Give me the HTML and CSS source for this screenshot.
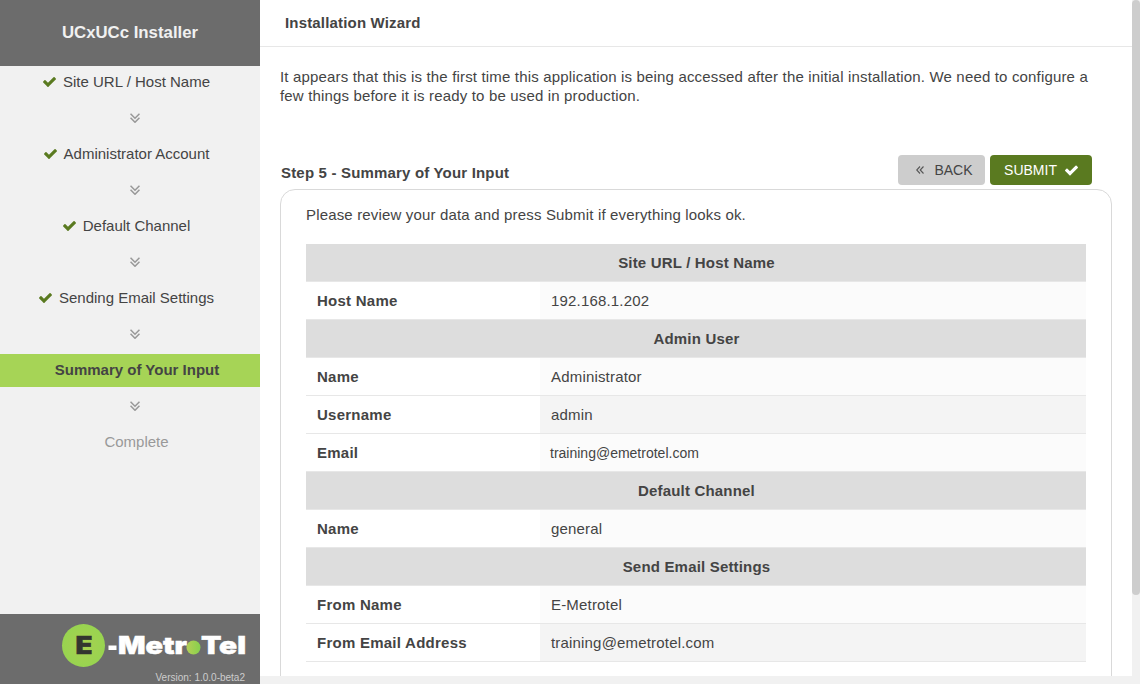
FILE: index.html
```html
<!DOCTYPE html>
<html lang="en">
<head>
<meta charset="utf-8">
<title>Installation Wizard</title>
<link rel="stylesheet" href="styles.css">
</head>
<body>
<svg class="defs" width="0" height="0">
  <symbol id="check" viewBox="0 0 1550 1188"><path d="M1550 232q0 40-28 68l-724 724-136 136q-28 28-68 28t-68-28l-136-136-362-362q-28-28-28-68t28-68l136-136q28-28 68-28t68 28l294 295 656-657q28-28 68-28t68 28l136 136q28 28 28 68z"/></symbol>
  <symbol id="down" viewBox="0 0 10 10"><path d="M.5 .7 5 5.2 9.5 .7M.5 4.7 5 9.2 9.5 4.7"/></symbol>
</svg>
<div class="app">
  <aside class="sidebar">
    <div class="brand">UCxUCc Installer</div>
    <nav class="steps">
      <div class="step"><svg class="check"><use href="#check"/></svg>Site URL / Host Name</div>
      <div class="arrow"><svg><use href="#down"/></svg></div>
      <div class="step"><svg class="check"><use href="#check"/></svg>Administrator Account</div>
      <div class="arrow"><svg><use href="#down"/></svg></div>
      <div class="step"><svg class="check"><use href="#check"/></svg>Default Channel</div>
      <div class="arrow"><svg><use href="#down"/></svg></div>
      <div class="step"><svg class="check"><use href="#check"/></svg>Sending Email Settings</div>
      <div class="arrow"><svg><use href="#down"/></svg></div>
      <div class="step current">Summary of Your Input</div>
      <div class="arrow"><svg><use href="#down"/></svg></div>
      <div class="step pending">Complete</div>
    </nav>
    <footer class="foot">
      <svg class="logo" width="186" height="46" viewBox="0 0 186 46">
        <defs>
          <radialGradient id="disc"><stop offset="0" stop-color="#a8d050"/><stop offset="1" stop-color="#98d450"/></radialGradient>
          <linearGradient id="dot"><stop offset="0" stop-color="#b5cf55"/><stop offset="1" stop-color="#86d04d"/></linearGradient>
        </defs>
        <circle cx="23.5" cy="23.5" r="21.5" fill="url(#disc)"/>
        <text class="mark dark" x="15.5" y="32" textLength="17" lengthAdjust="spacingAndGlyphs">E</text>
        <rect x="48.5" y="23.5" width="8" height="4.5" fill="#fff"/>
        <text class="mark" x="58" y="32" textLength="69" lengthAdjust="spacingAndGlyphs">Metr</text>
        <circle cx="133.5" cy="25.5" r="7" fill="url(#dot)"/>
        <text class="mark" x="141" y="32" textLength="45" lengthAdjust="spacingAndGlyphs">Tel</text>
      </svg>
      <div class="version">Version: 1.0.0-beta2</div>
    </footer>
  </aside>
  <main class="main">
    <h1 class="title">Installation Wizard</h1>
    <div class="content">
      <p class="intro">It appears that this is the first time this application is being accessed after the initial installation. We need to configure a<br>few things before it is ready to be used in production.</p>
      <div class="bar">
        <h2 class="heading">Step 5 - Summary of Your Input</h2>
        <button class="btn back"><svg class="left" viewBox="0 0 8 8"><path d="M4 .5 .7 4 4 7.5M7.5 .5 4.2 4 7.5 7.5"/></svg>BACK</button>
        <button class="btn submit">SUBMIT<svg class="tick"><use href="#check"/></svg></button>
      </div>
      <section class="panel">
        <p class="note">Please review your data and press Submit if everything looks ok.</p>
        <div class="table">
          <div class="group">Site URL / Host Name</div>
          <div class="row"><div class="key">Host Name</div><div class="val">192.168.1.202</div></div>
          <div class="group">Admin User</div>
          <div class="row"><div class="key">Name</div><div class="val">Administrator</div></div>
          <div class="row alt"><div class="key">Username</div><div class="val">admin</div></div>
          <div class="row"><div class="key">Email</div><div class="val plain">training@emetrotel.com</div></div>
          <div class="group">Default Channel</div>
          <div class="row"><div class="key">Name</div><div class="val">general</div></div>
          <div class="group">Send Email Settings</div>
          <div class="row"><div class="key">From Name</div><div class="val">E-Metrotel</div></div>
          <div class="row alt"><div class="key">From Email Address</div><div class="val">training@emetrotel.com</div></div>
        </div>
      </section>
    </div>
  </main>
  <div class="scroll"><div class="thumb"></div></div>
</div>
</body>
</html>
```
FILE: styles.css
```css
* { box-sizing: border-box; }
body { margin: 0; font: 15px/19px "Liberation Sans", Arial, sans-serif; color: #444; background: #f1f1f1; overflow: hidden; }
h1, h2, p { margin: 0; font-size: 15px; }
.defs { display: block; height: 0; }
.app { display: flex; height: 684px; }

.sidebar { width: 260px; display: flex; flex-direction: column; background: #f1f1f1; }
.brand { height: 66px; line-height: 65px; background: #6c6c6c; color: #f1f1f1; font-size: 16.8px; font-weight: bold; text-align: center; }
.steps { flex: 1; }
.step { height: 33px; display: flex; align-items: center; justify-content: center; padding: 0 7px 2px 0; }
.check { width: 13px; height: 10px; margin-right: 7px; fill: #5a7a20; }
.current { background: #a6d456; font-weight: bold; padding: 0 0 2px 14px; }
.pending { color: #999; padding: 0 0 2px 13px; }
.arrow { height: 39px; display: flex; align-items: center; justify-content: center; padding: 0 0 2px 9px; }
.arrow svg { width: 10px; height: 10px; fill: none; stroke: #999; stroke-width: 1.6; }
.foot { height: 70px; padding: 8px 15px 0 0; background: #6c6c6c; text-align: right; }
.logo { display: block; margin-left: 60px; }
.mark { font: 900 24px Inter, sans-serif; fill: #fff; stroke: #fff; stroke-width: .5px; }
.dark { fill: #33352f; stroke: #33352f; }
.version { font-size: 10px; line-height: 12px; padding-top: 4px; color: #ccc; }

.main { width: 872px; height: 676px; background: #fff; overflow: hidden; }
.title { height: 47px; line-height: 45px; padding-left: 25px; border-bottom: 1px solid #e7e7e7; letter-spacing: .17px; }
.content { padding: 20px 20px 0; }
.intro { letter-spacing: .165px; }
.bar { display: flex; height: 34px; margin-top: 50px; padding-right: 20px; }
.heading { flex: 1; padding: 8px 0 0 1px; letter-spacing: .18px; }
.btn { height: 30px; padding: 0; border: 0; border-radius: 4px; display: flex; align-items: center; justify-content: center; font: 14px "Liberation Sans", Arial, sans-serif; }
.back { width: 87px; margin-right: 5px; padding-left: 6px; background: #cdcdcd; color: #444; }
.submit { width: 102px; background: #5a7a20; color: #fff; }
.left { width: 8px; height: 8px; margin-right: 10px; fill: none; stroke: #555; stroke-width: 1.1; }
.tick { width: 13px; height: 11px; margin-left: 8px; fill: #fff; }

.panel { height: 520px; padding: 15px 25px 0; border: 1px solid #d9d9d9; border-radius: 15px 15px 0 0; }
.note { letter-spacing: .165px; }
.table { margin-top: 20px; }
.group, .row { height: 38px; border-bottom: 1px solid #e7e7e7; line-height: 37px; }
.group { background: #ddd; font-weight: bold; text-align: center; letter-spacing: .18px; padding-left: 1px; }
.row { display: flex; }
.key { width: 234px; padding-left: 11px; font-weight: bold; letter-spacing: .25px; }
.val { flex: 1; padding-left: 11px; background: #fbfbfb; letter-spacing: .18px; }
.alt .val { background: #f4f4f4; }
.plain { padding-left: 10px; font-size: 14px; line-height: 38px; letter-spacing: 0; }

.scroll { width: 8px; background: #f1f1f1; }
.thumb { height: 595px; background: #cdcdcd; border-radius: 4px; }
```
